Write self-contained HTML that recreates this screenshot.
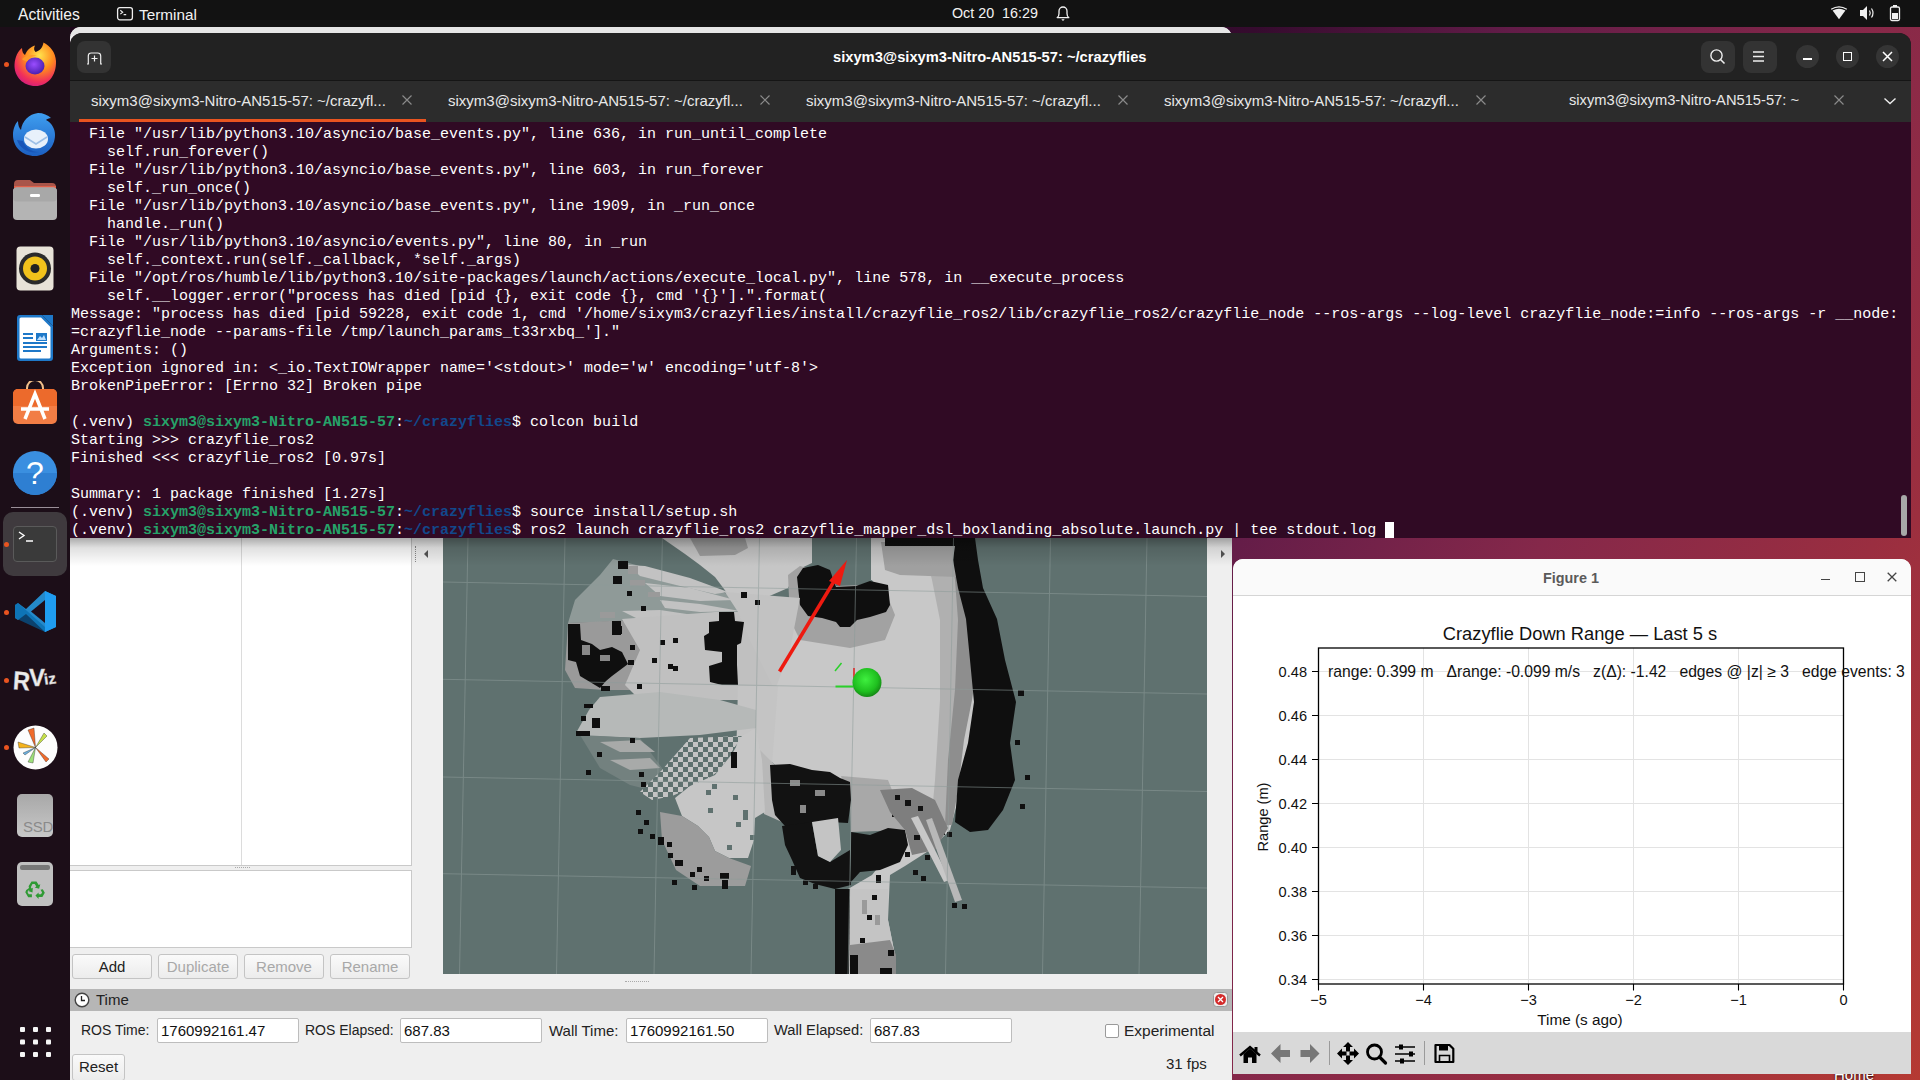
<!DOCTYPE html>
<html><head><meta charset="utf-8">
<style>
*{margin:0;padding:0;box-sizing:border-box}
html,body{width:1920px;height:1080px;overflow:hidden;background:#7a1f3d;font-family:"Liberation Sans",sans-serif}
.a{position:absolute}
#wall{left:0;top:0;width:1920px;height:1080px;background:linear-gradient(120deg,#1a0618 0%,#350b2e 50%,#621c48 60%,#85284a 73%,#9a2e40 86%,#b53a33 100%)}
#topbar{left:0;top:0;width:1920px;height:27px;background:#121212;color:#f2f2f2;font-size:15px}
#dock{left:0;top:27px;width:70px;height:1053px;background:#1c0e18}
.dot{position:absolute;left:4px;width:5px;height:5px;border-radius:50%;background:#e95420}
#rviz{left:70px;top:27px;width:1162px;height:1053px;background:#efefef;overflow:hidden;border-radius:11px 11px 0 0}
#term{left:70px;top:33px;width:1841px;height:505px;background:#300a24;border-radius:12px 12px 0 0;overflow:hidden}
#thead{left:0;top:0;width:1841px;height:48px;background:#222222;border-bottom:1px solid #151515}
#ttabs{left:0;top:48px;width:1841px;height:41px;background:#2c2c2c;color:#e8e8e8;font-size:15px}
#tbody{left:1px;top:93px;font-family:"Liberation Mono",monospace;font-size:15px;line-height:18px;color:#ffffff;white-space:pre}
.g{color:#26a269;font-weight:bold}
.b{color:#12488b;font-weight:bold}
.tab{position:absolute;top:11px;white-space:nowrap}
.tx{position:absolute;top:13px;width:12px;height:12px}
.hb{position:absolute;top:8px;width:34px;height:32px;border-radius:8px;background:#333333}
.cb{position:absolute;top:12px;width:23px;height:23px;border-radius:50%;background:#353535}
#fig{left:1233px;top:559px;width:678px;height:515px;background:#fff;border-radius:10px 10px 0 0;overflow:hidden}
.btn{position:absolute;height:25px;border:1px solid #c4c4c4;border-radius:3px;background:linear-gradient(#fafafa,#ececec);font-size:15px;text-align:center;line-height:23px;color:#222}
.btn.d{color:#a8a8a8}
.inp{position:absolute;height:25px;background:#fff;border:1px solid #bdbdbd;border-radius:2px;font-size:15px;line-height:23px;padding-left:3px;color:#111}
.lbl{position:absolute;font-size:15px;color:#222;white-space:nowrap}
.yt{position:absolute;left:45px;font-size:14.6px;color:#111}
.xt{position:absolute;top:431px;font-size:15px;color:#111;text-align:center;width:30px}
</style></head><body>
<div id="wall" class="a"></div>
<!-- TOPBAR -->
<div id="topbar" class="a">
  <div class="a" style="left:18px;top:6px;font-size:15.7px">Activities</div>
  <svg class="a" style="left:116px;top:6px" width="18" height="16" viewBox="0 0 18 16"><rect x="1.6" y="1.6" width="14.8" height="12.2" rx="2.2" fill="none" stroke="#eee" stroke-width="1.3"/><path d="M4.3 4.3l2.4 1.9-2.4 1.9M7.6 8.6h2.6" stroke="#eee" stroke-width="1.1" fill="none"/></svg>
  <div class="a" style="left:139px;top:6px;font-size:15.3px">Terminal</div>
  <div class="a" style="left:952px;top:5px;font-size:14.3px">Oct 20&nbsp;&nbsp;16:29</div>
  <svg class="a" style="left:1056px;top:4px" width="14" height="18" viewBox="0 0 14 18"><path d="M1.2 13.6Q3 12.5 3 9.5V7a4 4 0 0 1 8 0v2.5q0 3 1.8 4.1z" stroke="#f2f2f2" stroke-width="1.3" fill="none" stroke-linejoin="round"/><path d="M5.3 15.2h3.4L7 16.9z" fill="#f2f2f2"/></svg>
  <svg class="a" style="left:1830px;top:6px" width="18" height="14" viewBox="0 0 18 14"><path d="M1.2 3.2Q9 -1.6 16.8 3.2" stroke="#f0f0f0" stroke-width="1.3" fill="none"/><path d="M2.6 4.6Q9 1 15.4 4.6L9 13.2z" fill="#f0f0f0"/></svg>
  <svg class="a" style="left:1859px;top:5px" width="17" height="16" viewBox="0 0 17 16"><path d="M1 5h3l4-4v14l-4-4H1z" fill="#f0f0f0"/><path d="M10.5 5.5q1.5 2.5 0 5M12.5 3.5q3 4.5 0 9" stroke="#f0f0f0" stroke-width="1.2" fill="none"/></svg>
  <svg class="a" style="left:1889px;top:4px" width="12" height="18" viewBox="0 0 12 18"><rect x="1.5" y="3" width="9" height="13.5" rx="1.5" fill="none" stroke="#f0f0f0" stroke-width="1.3"/><rect x="4" y="1" width="4" height="2" fill="#f0f0f0"/><rect x="3" y="9" width="6" height="6" fill="#f0f0f0"/></svg>
</div>
<!-- DOCK -->
<div id="dock" class="a">
  <!-- firefox -->
  <div class="dot" style="top:35px"></div>
  <svg class="a" style="left:13px;top:14px" width="45" height="46" viewBox="0 0 45 46">
    <defs>
      <radialGradient id="ffo" cx="60%" cy="30%" r="75%"><stop offset="0" stop-color="#ffe34d"/><stop offset=".45" stop-color="#ff8a1e"/><stop offset=".8" stop-color="#f1305a"/><stop offset="1" stop-color="#d21d7f"/></radialGradient>
      <radialGradient id="ffp" cx="45%" cy="40%" r="60%"><stop offset="0" stop-color="#9a4dff"/><stop offset="1" stop-color="#4b1fb0"/></radialGradient>
    </defs>
    <path d="M22.5 45C10 45 1 35.5 1.5 23.5 2 16 5 10 9 7c0 4 1.5 6 3 7 2-5 6-8.5 10-9.5-1.5 3-1 5 .5 6.5 4-1 7-4 8-9.5 7 3.5 12 10 12.5 18.5C43.5 35 34.5 45 22.5 45z" fill="url(#ffo)"/>
    <ellipse cx="22" cy="25" rx="9.5" ry="8.5" fill="url(#ffp)"/>
    <path d="M9 18c4-4 10-5 15-3-5 0-8 2-9.5 5C12 20 10 19.5 9 18z" fill="#ff9a2a"/>
  </svg>
  <!-- thunderbird -->
  <svg class="a" style="left:11px;top:83px" width="48" height="48" viewBox="0 0 48 48">
    <defs><linearGradient id="tbg" x1="0" y1="0" x2="0" y2="1"><stop offset="0" stop-color="#3f9ff0"/><stop offset="1" stop-color="#1c5fc2"/></linearGradient></defs>
    <path d="M24 46C11 46 2 37 2 25c0-6 2-11 5-14 0 4 1 7 3 9 1-9 8-16 17-17 5 0 10 2 13 5-2 0-4 1-5 2 6 3 9 9 9 15 0 12-9 21-20 21z" fill="url(#tbg)"/>
    <ellipse cx="25" cy="29" rx="12" ry="9.5" fill="#e8f1fb"/>
    <path d="M14 27l11 7 11-7" stroke="#9cbfe6" stroke-width="1.5" fill="none"/>
    <path d="M6 30c3 9 12 14 22 12-8 0-14-5-16-11z" fill="#1855b8"/>
  </svg>
  <!-- files -->
  <svg class="a" style="left:12px;top:152px" width="46" height="42" viewBox="0 0 46 42">
    <path d="M2 5a4 4 0 0 1 4-4h12l4 3h18a4 4 0 0 1 4 4v6H2z" fill="#a9554a"/>
    <path d="M2 7h42v4H2z" fill="#e0604a"/>
    <rect x="1" y="8.5" width="44" height="32.5" rx="4" fill="#b4b4b4"/>
    <rect x="1" y="8.5" width="44" height="14" rx="4" fill="#a8a8a8"/>
    <rect x="18" y="15" width="10" height="3" rx="1.2" fill="#fff"/>
  </svg>
  <!-- rhythmbox -->
  <svg class="a" style="left:16px;top:219px" width="38" height="45" viewBox="0 0 38 45">
    <rect x="0.5" y="0.5" width="37" height="44" rx="4" fill="#e8e3d8"/>
    <circle cx="19" cy="22.5" r="16" fill="#2b2b2b"/>
    <circle cx="19" cy="22.5" r="12" fill="#f1c21b"/>
    <circle cx="19" cy="22.5" r="4.5" fill="#222"/>
  </svg>
  <!-- writer -->
  <svg class="a" style="left:16px;top:288px" width="38" height="46" viewBox="0 0 38 46">
    <path d="M1 3a3 3 0 0 1 3-3h22l11 11v32a3 3 0 0 1-3 3H4a3 3 0 0 1-3-3z" fill="#1e78c8"/>
    <path d="M3.5 4a1.5 1.5 0 0 1 1.5-1.5h20l9.5 9.5v30a1.5 1.5 0 0 1-1.5 1.5H5a1.5 1.5 0 0 1-1.5-1.5z" fill="#fff"/>
    <path d="M26 0h11v11z" fill="#1e78c8"/>
    <rect x="20" y="18" width="11" height="8" fill="#1e78c8"/>
    <path d="M21 25l3-4 2 2 2-3 2 5z" fill="#bde0ff"/>
    <path d="M7 19h10M7 23h10M7 28h24M7 32h24M7 36h18" stroke="#1e78c8" stroke-width="2"/>
  </svg>
  <!-- app center -->
  <svg class="a" style="left:12px;top:354px" width="46" height="43" viewBox="0 0 46 43">
    <path d="M15 9V7a8 8 0 0 1 16 0v2" stroke="#f2c08a" stroke-width="2" fill="none"/>
    <rect x="1" y="8" width="44" height="35" rx="5" fill="#f27d45"/>
    <rect x="1" y="8" width="44" height="17" rx="5" fill="#ec6a2c"/><rect x="1" y="20" width="44" height="5" fill="#ec6a2c"/>
    <path d="M13 38L23 13l10 25M9 28h28" stroke="#fff" stroke-width="3.5" fill="none"/>
  </svg>
  <!-- help -->
  <svg class="a" style="left:13px;top:424px" width="44" height="44" viewBox="0 0 44 44">
    <circle cx="22" cy="22" r="22" fill="#3a8fe0"/>
    <path d="M0 22a22 22 0 0 0 44 0z" fill="#2e7fd2"/>
    <text x="22" y="33" text-anchor="middle" font-family="Liberation Sans" font-size="32" fill="#fff">?</text>
  </svg>
  <div class="a" style="left:11px;top:480px;width:48px;height:1px;background:#9a8f98"></div>
  <!-- terminal (active) -->
  <div class="a" style="left:3px;top:485px;width:64px;height:64px;border-radius:10px;background:#3f3a3e"></div>
  <div class="dot" style="top:515px"></div>
  <div class="a" style="left:13px;top:499px;width:44px;height:36px;border-radius:4px;background:#3a3a3a;border:1px solid #5a5a5a"></div>
  <svg class="a" style="left:18px;top:504px" width="18" height="12" viewBox="0 0 18 12"><path d="M1 1l5 3.5-5 3.5M8 10h7" stroke="#fff" stroke-width="1.4" fill="none"/></svg>
  <!-- vscode -->
  <div class="dot" style="top:583px"></div>
  <svg class="a" style="left:14px;top:563px" width="43" height="43" viewBox="0 0 43 43">
    <path d="M31 1L42 6v31L31 42 12 24l-8 6-3-2V15l3-2 8 6z" fill="#2489ca"/>
    <path d="M31 1l11 5v31l-11 5z" fill="#1f9cf0"/>
    <path d="M31 10L17 21.5 31 33z" fill="#1e0d1a"/>
    <path d="M1 15l3-2 27 24v5L1 28z" fill="#0065a9" opacity=".6"/>
  </svg>
  <!-- rviz -->
  <div class="dot" style="top:651px"></div>
  <svg class="a" style="left:12px;top:637px" width="46" height="32" viewBox="0 0 46 32"><g font-family="Liberation Sans" font-weight="bold" fill="#ececec" stroke="#bdbdbd" stroke-width=".4"><text x="1" y="26" font-size="26" transform="rotate(4 10 20)" textLength="17" lengthAdjust="spacingAndGlyphs">R</text><text x="17" y="22" font-size="24" textLength="16" lengthAdjust="spacingAndGlyphs">V</text><text x="32" y="20" font-size="15" transform="rotate(-8 38 15)" textLength="12" lengthAdjust="spacingAndGlyphs">iz</text></g></svg>
  <!-- rqt wheel -->
  <div class="dot" style="top:718px"></div>
  <svg class="a" style="left:13px;top:698px" width="45" height="45" viewBox="0 0 45 45">
    <circle cx="22.5" cy="22.5" r="22" fill="#fdfdfd"/>
    <path d="M22.5 22.5L15 5l6-2z" fill="#f06a2a" stroke="#333" stroke-width=".4"/>
    <path d="M22.5 22.5L31 8l3 3z" fill="#c6e04a" stroke="#333" stroke-width=".4"/>
    <path d="M22.5 22.5L5 17l1 6z" fill="#f5b31c" stroke="#333" stroke-width=".4"/>
    <path d="M22.5 22.5L36 34l-3 3z" fill="#f06a2a" stroke="#333" stroke-width=".4"/>
    <path d="M22.5 22.5L20 38l-5-1z" fill="#9de07a" stroke="#333" stroke-width=".4"/>
    <path d="M22.5 22.5L12 30l-2-2z" fill="#6ab0e0" stroke="#333" stroke-width=".4"/>
  </svg>
  <!-- ssd -->
  <div class="a" style="left:17px;top:767px;width:36px;height:43px;border-radius:5px;background:linear-gradient(#a8a8a8,#c8c8c8);color:#8a8a8a;font-size:15px;text-align:right;padding-top:24px;padding-right:0;letter-spacing:-.3px">SSD</div>
  <!-- trash -->
  <div class="a" style="left:17px;top:835px;width:36px;height:44px;border-radius:5px;background:#c0c0c0"></div>
  <div class="a" style="left:20px;top:838px;width:30px;height:5px;border-radius:2px;background:#777"></div>
  <svg class="a" style="left:25px;top:853px" width="20" height="19" viewBox="0 0 20 19"><g fill="#2f9a34"><path d="M6.5 1.5h5l2.2 3.6 1.6-.9-1.2 4.6-4.4-1.4 1.6-.9-1.6-2.6h-2.2L5.6 7.8 3.4 6.5z"/><path d="M17.8 9.2l2 3.6-2.4 4.2h-3.8v1.9L10.4 15.6l3.2-3.2v1.9h2.4l1.1-1.9-1.6-2.7z"/><path d="M1.2 10l2.3-1.4 1.4-3.6 1.6 3.6 1.3-.8-.3 4.6-4.3-1.4 1.4-.8-.9-.3-1.2 2.1 1.2 2.2h3.2v3H3.2L.3 12.2z"/></g></svg>
  <!-- app grid -->
  <svg class="a" style="left:20px;top:1000px" width="31" height="30" viewBox="0 0 31 30">
    <g fill="#f5f5f5"><rect x="0" y="0" width="5" height="5" rx="1"/><rect x="13" y="0" width="5" height="5" rx="1"/><rect x="26" y="0" width="5" height="5" rx="1"/><rect x="0" y="12.5" width="5" height="5" rx="1"/><rect x="13" y="12.5" width="5" height="5" rx="1"/><rect x="26" y="12.5" width="5" height="5" rx="1"/><rect x="0" y="25" width="5" height="5" rx="1"/><rect x="13" y="25" width="5" height="5" rx="1"/><rect x="26" y="25" width="5" height="5" rx="1"/></g>
  </svg>

</div>
<div class="a" style="left:1834px;top:1066px;font-size:15px;color:#fff;text-shadow:0 1px 2px #000">Home</div>
<!-- RVIZ -->
<div id="rviz" class="a">
  <div class="a" style="left:0;top:0;width:1162px;height:8px;background:#e6e6e6;border-radius:12px 12px 0 0"></div>
  <!-- left tree panel -->
  <div class="a" style="left:0;top:505px;width:342px;height:334px;background:#fff;border:1px solid #c9c9c9;border-left:none"></div>
  <div class="a" style="left:171px;top:505px;width:1px;height:333px;background:#dcdcdc"></div>
  <div class="a" style="left:165px;top:840px;width:15px;height:2px;border-top:1px dotted #aaa"></div>
  <div class="a" style="left:0;top:843px;width:342px;height:78px;background:#fff;border:1px solid #c9c9c9;border-left:none"></div>
  <div class="btn" style="left:2px;top:927px;width:80px">Add</div>
  <div class="btn d" style="left:88px;top:927px;width:80px">Duplicate</div>
  <div class="btn d" style="left:174px;top:927px;width:80px">Remove</div>
  <div class="btn d" style="left:260px;top:927px;width:80px">Rename</div>
  <!-- gap + arrows -->
  <div class="a" style="left:345px;top:519px;width:1px;height:16px;border-left:1px dotted #888"></div>
  <svg class="a" style="left:353px;top:522px" width="6" height="10" viewBox="0 0 6 10"><path d="M5 1v8L1 5z" fill="#555"/></svg>
  <svg class="a" style="left:1150px;top:522px" width="6" height="10" viewBox="0 0 6 10"><path d="M1 1v8l4-4z" fill="#555"/></svg>
  <!-- map -->
  <div class="a" style="left:373px;top:505px;width:764px;height:442px;background:#5f716f;overflow:hidden">
<svg class="a" style="left:0;top:0" width="764" height="442" viewBox="443 532 764 442">
  <!-- upper fingers band (mixed light/bg) -->
  <polygon fill="#8f9a98" points="613,559 640,566 690,580 730,595 760,605 745,613 715,613 660,618 600,622 568,623 575,600 600,575"/>
  <!-- finger streaks (light) -->
  <g fill="#c2c2c2">
    <polygon points="628,565 645,566 690,578 728,592 715,594 680,586 640,576"/>
    <polygon points="645,583 690,588 735,600 700,601 660,596"/>
    <polygon points="660,600 700,604 740,611 700,612 665,608"/>
    <polygon points="622,611 660,610 700,616 640,620"/>
  </g>
  <g fill="#9a9a9a"><rect x="628" y="566" width="10" height="8"/><rect x="630" y="580" width="15" height="6"/><rect x="648" y="592" width="12" height="5"/><rect x="600" y="612" width="15" height="6"/></g>
  <!-- top wedge light -->
  <polygon fill="#c6c6c6" points="662,538 812,538 812,563 797,570 788,588 760,600 730,597 715,577 700,565 685,554"/>
  <polygon fill="#9c9c9c" points="690,538 745,538 748,548 735,555 700,556"/>
  <!-- left lower cluster region (gray mix) -->
  <polygon fill="#9a9a9a" points="568,623 630,620 660,625 680,640 660,682 630,690 605,690 575,688 565,670"/>
  <!-- mid light area -->
  <polygon fill="#c0c0c0" points="622,619 715,612 745,612 770,630 775,690 760,700 700,700 640,700 625,685 640,650"/>
  <!-- core light -->
  <polygon fill="#c8c8c8" points="740,600 797,598 885,596 871,579 871,538 960,538 970,580 978,640 978,700 968,760 958,800 950,830 930,850 905,866 890,875 888,920 896,960 896,974 848,974 848,889 872,875 900,840 870,820 850,800 780,770 760,750 756,725 700,720 760,700 775,690 770,630"/>
  <!-- right gradient halo -->
  <polygon fill="#b0b0b0" points="927,560 955,545 968,600 972,680 966,720 958,780 950,825 930,835 935,780 940,700 940,620 932,580"/>
  <polygon fill="#8e8e8e" points="950,548 962,545 970,600 978,660 972,700 964,740 958,790 952,825 945,825 948,760 955,690 958,620 955,580"/>
  <!-- top gray halo -->
  <polygon fill="#a2a2a2" points="788,575 800,566 885,590 895,615 885,640 850,648 800,640 790,620"/>
  <polygon fill="#a0a0a0" points="881,542 958,542 958,577 900,575 885,570"/>
  <!-- notch bg -->
  <polygon fill="#5f716f" points="812,538 871,538 871,580 860,585 836,586 830,570 812,564"/>
  <!-- light column right of notch -->
  <polygon fill="#c8c8c8" points="871,544 880,546 881,580 871,580"/>
  <!-- black top patch -->
  <polygon fill="#0f0f0f" points="797,577 803,568 818,565 830,570 836,587 856,586 870,581 888,585 890,605 886,612 870,617 857,620 850,627 840,627 836,622 822,618 808,616 800,605"/>
  <!-- black right band -->
  <polygon fill="#0f0f0f" points="885,538 975,538 978,560 983,588 997,619 1005,660 1016,702 1010,743 1015,780 1003,810 988,830 970,832 955,822 958,780 968,743 974,702 970,660 966,619 958,588 953,560 955,546 885,546"/>
  <g fill="#0f0f0f"><rect x="1020" y="804" width="5" height="5"/><rect x="1025" y="775" width="5" height="5"/><rect x="1018" y="690" width="6" height="6"/><rect x="1015" y="740" width="5" height="5"/></g>
  <!-- black left cluster -->
  <polygon fill="#0f0f0f" points="568,624 580,624 581,640 592,644 600,650 612,647 622,652 628,664 620,670 612,676 606,681 600,688 590,682 580,676 576,662 568,660"/><g fill="#0f0f0f"><rect x="612" y="621" width="9" height="14"/><rect x="628" y="660" width="6" height="5"/><rect x="596" y="668" width="8" height="12"/></g><g fill="#888"><rect x="582" y="645" width="8" height="10"/><rect x="600" y="655" width="10" height="6"/></g>
  <g fill="#0f0f0f"><rect x="618" y="561" width="10" height="8"/><rect x="613" y="576" width="9" height="8"/><rect x="627" y="591" width="5" height="5"/><rect x="641" y="606" width="5" height="5"/><rect x="612" y="626" width="10" height="8"/><rect x="630" y="645" width="5" height="5"/><rect x="652" y="658" width="5" height="5"/><rect x="660" y="640" width="5" height="5"/><rect x="673" y="666" width="5" height="5"/><rect x="637" y="684" width="5" height="5"/><rect x="601" y="686" width="9" height="5"/></g>
  <polygon fill="#c2c2c2" points="725,592 800,598 790,650 775,690 750,640 738,612"/>
  <polygon fill="#c4c4c4" points="738,686 778,686 772,765 736,762"/>
  <!-- black mid cluster -->
  <polygon fill="#0f0f0f" points="719,612 734,612 735,621 744,622 741,643 737,645 737,665 738,685 722,685 710,682 709,666 722,662 722,652 705,650 704,636 709,633 709,622 719,621"/>
  <g fill="#0f0f0f"><rect x="741" y="592" width="6" height="6"/><rect x="755" y="600" width="5" height="5"/><rect x="673" y="638" width="5" height="5"/><rect x="668" y="664" width="5" height="5"/></g>
  <!-- lower fan upper band -->
  <polygon fill="#b6b9b8" points="600,697 660,692 720,700 756,710 756,728 700,735 640,738 590,736 576,733 589,710"/>
  <!-- thin rays region -->
  <polygon fill="#73817f" points="580,735 640,738 662,768 658,792 630,785 600,768"/><g fill="#a8aaa9"><polygon points="600,742 640,740 655,752 620,752"/><polygon points="610,760 650,758 660,768 630,770"/></g>
  <!-- main diagonal light -->
  <defs><pattern id="chk" width="10" height="10" patternUnits="userSpaceOnUse" x="3" y="2"><rect width="10" height="10" fill="#5f716f"/><rect width="5" height="5" fill="#c4c4c4"/><rect x="5" y="5" width="5" height="5" fill="#c4c4c4"/></pattern></defs>
  <polygon fill="#b8b8b8" points="754,726 760,750 780,770 792,776 782,822 764,814 758,770"/>
  <polygon fill="url(#chk)" points="690,738 742,736 720,770 700,784 672,796 652,800 640,792 662,770"/>
  <polygon fill="#c6c6c6" points="740,740 742,736 756,728 762,760 765,812 755,818 754,840 748,858 729,858 715,851 709,837 698,826 682,816 675,798 690,786 715,775 732,754"/>
  <polygon fill="#9c9c9c" points="660,812 682,816 698,826 709,837 715,851 729,858 751,866 745,886 700,886 676,870 662,840"/>
  <g fill="#5f716f"><rect x="712" y="784" width="5" height="5"/><rect x="706" y="790" width="5" height="5"/><rect x="733" y="795" width="5" height="5"/><rect x="743" y="810" width="5" height="10"/><rect x="736" y="822" width="5" height="5"/><rect x="750" y="835" width="5" height="5"/><rect x="708" y="808" width="5" height="5"/><rect x="727" y="845" width="5" height="5"/></g>
  <g fill="#0f0f0f"><rect x="584" y="704" width="9" height="4"/><rect x="581" y="716" width="5" height="5"/><rect x="592" y="718" width="8" height="10"/><rect x="576" y="731" width="14" height="5"/><rect x="630" y="738" width="5" height="5"/><rect x="597" y="752" width="5" height="5"/><rect x="586" y="770" width="5" height="5"/><rect x="639" y="772" width="5" height="5"/><rect x="641" y="782" width="5" height="5"/><rect x="636" y="810" width="5" height="5"/><rect x="644" y="820" width="5" height="5"/><rect x="638" y="829" width="5" height="5"/><rect x="650" y="834" width="5" height="5"/><rect x="658" y="837" width="6" height="8"/><rect x="667" y="842" width="5" height="5"/><rect x="668" y="853" width="5" height="5"/><rect x="675" y="860" width="8" height="6"/><rect x="690" y="872" width="5" height="5"/><rect x="697" y="867" width="5" height="5"/><rect x="704" y="876" width="5" height="5"/><rect x="720" y="873" width="9" height="6"/><rect x="722" y="880" width="6" height="9"/><rect x="672" y="880" width="5" height="5"/><rect x="692" y="885" width="5" height="5"/><rect x="731" y="752" width="6" height="16"/></g>
  <!-- bottom black mass -->
  <polygon fill="#a8a8a8" points="841,776 888,780 900,810 905,830 851,832 850,800"/>
  <polygon fill="#121212" points="770,765 790,764 812,770 830,772 840,778 850,782 851,800 848,823 830,822 812,822 800,830 785,826 775,815 772,800"/>
  <polygon fill="#121212" points="782,826 812,822 818,856 830,862 850,850 851,885 835,889 815,884 800,878 792,860 785,845"/>
  <polygon fill="#c4c4c4" points="812,822 838,818 841,850 830,862 818,856"/>
  <polygon fill="#121212" points="851,832 870,835 888,828 905,830 908,845 900,862 880,870 860,872 851,882"/>
  <g fill="#8a8a8a"><rect x="790" y="780" width="10" height="6"/><rect x="815" y="790" width="10" height="6"/><rect x="800" y="805" width="6" height="8"/></g>
  <g fill="#121212"><rect x="803" y="880" width="5" height="5"/><rect x="813" y="884" width="5" height="5"/><rect x="791" y="866" width="5" height="9"/><rect x="892" y="812" width="5" height="5"/><rect x="900" y="817" width="5" height="5"/><rect x="913" y="817" width="5" height="5"/><rect x="905" y="852" width="5" height="5"/><rect x="925" y="855" width="5" height="5"/><rect x="934" y="840" width="5" height="5"/><rect x="940" y="830" width="5" height="5"/><rect x="947" y="832" width="5" height="5"/><rect x="913" y="870" width="5" height="5"/><rect x="921" y="876" width="5" height="5"/></g>
  <polygon fill="#7e7e7e" points="880,790 912,788 935,800 948,828 935,850 912,855 905,830 890,812"/>
  <g fill="#121212"><rect x="905" y="800" width="6" height="6"/><rect x="918" y="806" width="5" height="5"/><rect x="928" y="820" width="5" height="5"/><rect x="914" y="835" width="6" height="5"/><rect x="895" y="795" width="5" height="5"/></g>
  <!-- stem -->
  <polygon fill="#c4c4c4" points="848,889 888,889 888,920 896,960 896,974 848,974"/>
  <polygon fill="#0f0f0f" points="835,889 850,889 849,974 835,974"/>
  <polygon fill="#8a8a8a" points="850,945 890,940 896,955 896,974 850,974"/><g fill="#9a9a9a"><rect x="862" y="900" width="5" height="14"/><rect x="875" y="915" width="5" height="10"/></g>
  <g fill="#0f0f0f"><rect x="850" y="955" width="8" height="19"/><rect x="860" y="938" width="5" height="5"/><rect x="880" y="968" width="12" height="6"/><rect x="888" y="950" width="6" height="6"/><rect x="867" y="915" width="5" height="5"/><rect x="872" y="895" width="5" height="5"/><rect x="876" y="875" width="5" height="8"/></g>
  <!-- right rays -->
  <polygon fill="#c8c8c8" points="911,818 918,816 950,880 944,882"/>
  <polygon fill="#b8b8b8" points="926,820 932,818 962,900 955,902"/>
  <g fill="#0f0f0f"><rect x="952" y="903" width="5" height="5"/><rect x="962" y="904" width="5" height="5"/></g>
  <!-- grid -->
  <g stroke="#8e9c9a" stroke-width="1" opacity=".55">
    <path d="M443 582L1207 596.5M443 679.3L1207 694M443 777L1207 791.5M443 873.7L1207 888"/>
    <path d="M468 538L459.5 974M565 538L556.5 974M662.4 538L654 974M759.5 538L751 974M856.5 538L848 974M953.5 538L945.5 974M1050.5 538L1042.5 974M1147 538L1139 974"/>
  </g>
  <!-- robot -->
  <path d="M835.5 686.5H853" stroke="#2ad02a" stroke-width="2"/>
  <path d="M835 671L841.5 663" stroke="#2ad02a" stroke-width="1.5"/>
  <path d="M854 668v13" stroke="#e02020" stroke-width="1.5"/>
  <defs><radialGradient id="rb" cx="45%" cy="40%" r="60%"><stop offset="0" stop-color="#3ff03f"/><stop offset=".7" stop-color="#1fbf1f"/><stop offset="1" stop-color="#168a16"/></radialGradient></defs>
  <circle cx="867" cy="682.5" r="14.5" fill="url(#rb)"/>
  <!-- arrow -->
  <path d="M779.5 671.5L836 578" stroke="#ee1a10" stroke-width="3.5"/>
  <polygon fill="#ee1a10" points="847,560 829,581 840,586"/>
</svg>

  </div>
  <div class="a" style="left:555px;top:954px;width:24px;height:2px;border-top:1px dotted #aaa"></div>
  <!-- time panel -->
  <div class="a" style="left:0;top:962px;width:1162px;height:22px;background:#b6b6b6"></div>
  <svg class="a" style="left:4px;top:965px" width="16" height="16" viewBox="0 0 16 16"><circle cx="8" cy="8" r="6.8" fill="#fff" stroke="#444" stroke-width="1.4"/><path d="M7.5 4v4.5h3.5" stroke="#222" stroke-width="1.3" fill="none"/></svg>
  <div class="lbl" style="left:26px;top:964px">Time</div>
  <svg class="a" style="left:1143px;top:965px" width="15" height="15" viewBox="0 0 15 15"><rect x=".5" y=".5" width="14" height="14" rx="3" fill="#eee" stroke="#999"/><circle cx="7.5" cy="7.5" r="5.5" fill="#d42a2a"/><path d="M5 5l5 5M10 5l-5 5" stroke="#fff" stroke-width="1.3"/></svg>
  <div class="lbl" style="left:11px;top:995px;font-size:14px">ROS Time:</div>
  <div class="inp" style="left:87px;top:991px;width:142px">1760992161.47</div>
  <div class="lbl" style="left:235px;top:995px;font-size:14px">ROS Elapsed:</div>
  <div class="inp" style="left:330px;top:991px;width:142px">687.83</div>
  <div class="lbl" style="left:479px;top:995px">Wall Time:</div>
  <div class="inp" style="left:556px;top:991px;width:142px">1760992161.50</div>
  <div class="lbl" style="left:704px;top:995px;font-size:14.7px">Wall Elapsed:</div>
  <div class="inp" style="left:800px;top:991px;width:142px">687.83</div>
  <div class="a" style="left:1035px;top:997px;width:14px;height:14px;background:#fff;border:1px solid #9a9a9a;border-radius:2px"></div>
  <div class="lbl" style="left:1054px;top:995px;font-size:15.5px">Experimental</div>
  <div class="lbl" style="left:1096px;top:1028px">31 fps</div>
  <div class="btn" style="left:2px;top:1027px;width:53px;height:27px">Reset</div>

</div>
<div class="a" style="left:70px;top:538px;width:1162px;height:28px;background:linear-gradient(rgba(0,0,0,.33),rgba(0,0,0,.12) 35%,rgba(0,0,0,0))"></div>
<!-- TERMINAL -->
<div id="term" class="a">
  <div id="thead" class="a">
    <div class="hb" style="left:7px"><svg class="a" style="left:9px;top:11px" width="17" height="13" viewBox="0 0 17 13"><path d="M1 12h1.3V4Q2.3 1 5.3 1h6.4Q14.7 1 14.7 4V12H16" stroke="#eee" stroke-width="1.2" fill="none"/><path d="M5.5 6.5h6M8.5 3.5v6" stroke="#eee" stroke-width="1.2"/></svg></div>
    <div class="a" style="left:763px;top:16px;font-size:14.7px;font-weight:bold;color:#ffffff;white-space:nowrap">sixym3@sixym3-Nitro-AN515-57: ~/crazyflies</div>
    <div class="hb" style="left:1631px"><svg class="a" style="left:8px;top:7px" width="18" height="18" viewBox="0 0 18 18"><circle cx="7.5" cy="7.5" r="5.6" stroke="#eee" stroke-width="1.4" fill="none"/><path d="M11.5 11.5l4 4" stroke="#eee" stroke-width="1.6"/></svg></div>
    <div class="hb" style="left:1673px"><svg class="a" style="left:8px;top:9px" width="18" height="14" viewBox="0 0 18 14"><path d="M2 2h11M2 6.5h11M2 11h11" stroke="#eee" stroke-width="1.3"/></svg></div>
    <div class="cb" style="left:1726px"><div class="a" style="left:7px;top:13px;width:9px;height:1.5px;background:#fff"></div></div>
    <div class="cb" style="left:1766px"><div class="a" style="left:7px;top:7px;width:9px;height:9px;border:1.5px solid #fff"></div></div>
    <div class="cb" style="left:1806px"><svg class="a" style="left:6px;top:6px" width="11" height="11" viewBox="0 0 11 11"><path d="M1 1l9 9M10 1l-9 9" stroke="#fff" stroke-width="1.5"/></svg></div>
  </div>
  <div id="ttabs" class="a">
    <div class="tab" style="left:21px">sixym3@sixym3-Nitro-AN515-57: ~/crazyfl...</div>
    <svg class="tx" style="left:331px" viewBox="0 0 12 12"><path d="M1.5 1.5l9 9M10.5 1.5l-9 9" stroke="#8a8a8a" stroke-width="1.2"/></svg>
    <div class="a" style="left:9px;top:38px;width:347px;height:3px;background:#e95420"></div>
    <div class="tab" style="left:378px">sixym3@sixym3-Nitro-AN515-57: ~/crazyfl...</div>
    <svg class="tx" style="left:689px" viewBox="0 0 12 12"><path d="M1.5 1.5l9 9M10.5 1.5l-9 9" stroke="#8a8a8a" stroke-width="1.2"/></svg>
    <div class="tab" style="left:736px">sixym3@sixym3-Nitro-AN515-57: ~/crazyfl...</div>
    <svg class="tx" style="left:1047px" viewBox="0 0 12 12"><path d="M1.5 1.5l9 9M10.5 1.5l-9 9" stroke="#8a8a8a" stroke-width="1.2"/></svg>
    <div class="tab" style="left:1094px">sixym3@sixym3-Nitro-AN515-57: ~/crazyfl...</div>
    <svg class="tx" style="left:1405px" viewBox="0 0 12 12"><path d="M1.5 1.5l9 9M10.5 1.5l-9 9" stroke="#8a8a8a" stroke-width="1.2"/></svg>
    <div class="tab" style="left:1499px;font-size:14.7px">sixym3@sixym3-Nitro-AN515-57: ~</div>
    <svg class="tx" style="left:1763px" viewBox="0 0 12 12"><path d="M1.5 1.5l9 9M10.5 1.5l-9 9" stroke="#8a8a8a" stroke-width="1.2"/></svg>
    <svg class="a" style="left:1813px;top:15px" width="14" height="10" viewBox="0 0 14 10"><path d="M1.5 2.5l5.5 5 5.5-5" stroke="#eee" stroke-width="1.4" fill="none"/></svg>
  </div>
  <div id="tbody" class="a">  File "/usr/lib/python3.10/asyncio/base_events.py", line 636, in run_until_complete
    self.run_forever()
  File "/usr/lib/python3.10/asyncio/base_events.py", line 603, in run_forever
    self._run_once()
  File "/usr/lib/python3.10/asyncio/base_events.py", line 1909, in _run_once
    handle._run()
  File "/usr/lib/python3.10/asyncio/events.py", line 80, in _run
    self._context.run(self._callback, *self._args)
  File "/opt/ros/humble/lib/python3.10/site-packages/launch/actions/execute_local.py", line 578, in __execute_process
    self.__logger.error("process has died [pid {}, exit code {}, cmd '{}'].".format(
Message: "process has died [pid 59228, exit code 1, cmd '/home/sixym3/crazyflies/install/crazyflie_ros2/lib/crazyflie_ros2/crazyflie_node --ros-args --log-level crazyflie_node:=info --ros-args -r __node:
=crazyflie_node --params-file /tmp/launch_params_t33rxbq_']."
Arguments: ()
Exception ignored in: &lt;_io.TextIOWrapper name='&lt;stdout&gt;' mode='w' encoding='utf-8'&gt;
BrokenPipeError: [Errno 32] Broken pipe

(.venv) <span class="g">sixym3@sixym3-Nitro-AN515-57</span>:<span class="b">~/crazyflies</span>$ colcon build
Starting &gt;&gt;&gt; crazyflie_ros2
Finished &lt;&lt;&lt; crazyflie_ros2 [0.97s]

Summary: 1 package finished [1.27s]
(.venv) <span class="g">sixym3@sixym3-Nitro-AN515-57</span>:<span class="b">~/crazyflies</span>$ source install/setup.sh
(.venv) <span class="g">sixym3@sixym3-Nitro-AN515-57</span>:<span class="b">~/crazyflies</span>$ ros2 launch crazyflie_ros2 crazyflie_mapper_dsl_boxlanding_absolute.launch.py | tee stdout.log <span style="background:#fff">&#160;</span></div>
  <div class="a" style="left:1831px;top:462px;width:6px;height:41px;border-radius:3px;background:#a8a8a8"></div>
</div>
<!-- FIGURE -->
<div id="fig" class="a">
  <div class="a" style="left:0;top:0;width:678px;height:37px;background:#fafafa;border-bottom:1px solid #d5d5d5"></div>
  <div class="a" style="left:310px;top:11px;font-size:14.4px;font-weight:bold;color:#5a5a5a">Figure 1</div>
  <div class="a" style="left:588px;top:20px;width:9px;height:1.3px;background:#444"></div>
  <div class="a" style="left:622px;top:13px;width:10px;height:10px;border:1.3px solid #444"></div>
  <svg class="a" style="left:654px;top:13px" width="10" height="10" viewBox="0 0 10 10"><path d="M.7.7l8.6 8.6M9.3.7L.7 9.3" stroke="#444" stroke-width="1.3"/></svg>
  <svg class="a" style="left:0;top:37px" width="678" height="436" viewBox="0 37 678 436" font-family="Liberation Sans">
    <g stroke="#e3e3e3" stroke-width="1">
      <path d="M85.5 112.5h525M85.5 156.5h525M85.5 200.5h525M85.5 244.5h525M85.5 288.5h525M85.5 332.5h525M85.5 376.5h525M85.5 420.5h525"/>
      <path d="M190.5 89v336M295.5 89v336M400.5 89v336M505.5 89v336"/>
    </g>
    <rect x="85.5" y="89" width="525" height="336" fill="none" stroke="#000" stroke-width="1.3"/>
    <g stroke="#000" stroke-width="1.1">
      <path d="M79 112.5h6.5M79 156.5h6.5M79 200.5h6.5M79 244.5h6.5M79 288.5h6.5M79 332.5h6.5M79 376.5h6.5M79 420.5h6.5"/>
      <path d="M85.5 425v6.5M190.5 425v6.5M295.5 425v6.5M400.5 425v6.5M505.5 425v6.5M610.5 425v6.5"/>
    </g>
    <g font-size="14.6" fill="#111" text-anchor="end">
      <text x="74" y="117.5">0.48</text><text x="74" y="161.5">0.46</text><text x="74" y="205.5">0.44</text><text x="74" y="249.5">0.42</text><text x="74" y="293.5">0.40</text><text x="74" y="337.5">0.38</text><text x="74" y="381.5">0.36</text><text x="74" y="425.5">0.34</text>
    </g>
    <g font-size="14.6" fill="#111" text-anchor="middle">
      <text x="85.5" y="446">−5</text><text x="190.5" y="446">−4</text><text x="295.5" y="446">−3</text><text x="400.5" y="446">−2</text><text x="505.5" y="446">−1</text><text x="610.5" y="446">0</text>
      <text x="347" y="465.5" font-size="15.3">Time (s ago)</text>
      <text x="347" y="81" font-size="18.3">Crazyflie Down Range — Last 5 s</text>
    </g>
    <text x="95" y="117.5" font-size="15.7" fill="#111" xml:space="preserve">range: 0.399 m   Δrange: -0.099 m/s   z(Δ): -1.42   edges @ |z| ≥ 3   edge events: 3</text>
    <text transform="translate(35 258) rotate(-90)" font-size="14.6" fill="#111" text-anchor="middle">Range (m)</text>
  </svg>
  <div class="a" style="left:0;top:473px;width:678px;height:42px;background:#d9d9d9"></div>
  <svg class="a" style="left:0;top:473px" width="678" height="42" viewBox="0 0 678 42">
    <path d="M7 23.5L17 15l10 8.5" stroke="#000" stroke-width="2.4" fill="none"/>
    <path d="M10.5 22L17 16.5l6.5 5.5V31h-4.5v-5.5h-4V31h-4.5z" fill="#000"/>
    <rect x="21.5" y="15" width="3" height="5" fill="#000"/>
    <g fill="#777"><path d="M38 21.5l9.5-9.5v6h9.5v7h-9.5v6z"/><path d="M86.5 21.5l-9.5-9.5v6h-9.5v7h9.5v6z"/></g>
    <path d="M96.5 9v24M191.5 9v24" stroke="#9a9a9a" stroke-width="1"/>
    <g fill="#000"><path d="M115 10l5 5h-3v4.5h-4V15h-3z"/><path d="M115 33l5-5h-3v-4.5h-4V28h-3z"/><path d="M104 21.5l5-5v3h4.5v4H109v3z"/><path d="M126 21.5l-5-5v3h-4.5v4H121v3z"/></g>
    <g stroke="#000" fill="none"><circle cx="141.5" cy="20" r="7" stroke-width="2.8"/><path d="M146.5 25l6 6" stroke-width="3.2" stroke-linecap="round"/></g>
    <g stroke="#000" stroke-width="1.4"><path d="M162 15h20M162 22h20M162 29h20"/></g>
    <g fill="#000"><rect x="166" y="12.5" width="4" height="5"/><rect x="176" y="19.5" width="4" height="5"/><rect x="167" y="26.5" width="4" height="5"/></g>
    <path d="M202.5 13h14l3.8 3.8V30h-17.8z" stroke="#000" stroke-width="2.2" fill="none" stroke-linejoin="round"/>
    <path d="M206 13h9v5.5h-9z" fill="#000"/><path d="M206.5 23.5h10v6.5h-10z" stroke="#000" stroke-width="1.6" fill="none"/>
  </svg>

</div>
</body></html>
